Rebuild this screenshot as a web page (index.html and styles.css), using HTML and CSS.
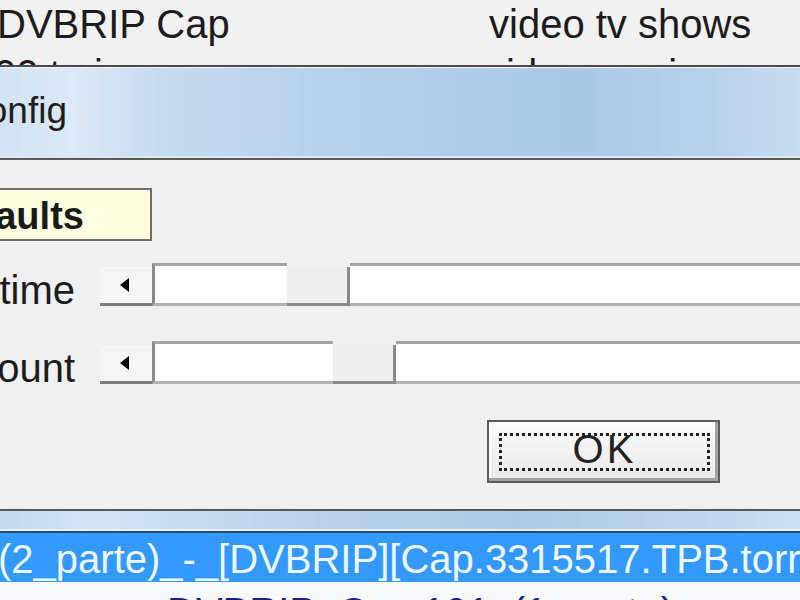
FILE: index.html
```html
<!DOCTYPE html>
<html lang="es">
<head>
  <meta charset="UTF-8" />
  <title>Config</title>
  <link rel="stylesheet" href="styles.css">
</head>
<body>
  <div class="screen">
    <div class="list list-top">
      <div class="row">
        <span class="col-name lead-1">DVBRIP Cap</span>
        <span class="col-tags">video tv shows</span>
      </div>
      <div class="row second">
        <span class="col-name lead-2">00 tvrip</span>
        <span class="col-tags">video movies</span>
      </div>
    </div>

    <div class="dlg">
      <div class="dlg-title"><span class="dlg-caption">Config</span></div>
      <div class="dlg-body">
        <div class="preset">Defaults</div>

        <div class="field">
          <label class="field-label">Wait time</label>
          <div class="sb">
            <div class="sb-arrow"><i class="tri-left"></i></div>
            <div class="sb-track first" style="width: 135px"></div>
            <div class="sb-thumb"></div>
            <div class="sb-track rest"></div>
          </div>
        </div>

        <div class="field">
          <label class="field-label">Retry count</label>
          <div class="sb">
            <div class="sb-arrow"><i class="tri-left"></i></div>
            <div class="sb-track first" style="width: 181px"></div>
            <div class="sb-thumb"></div>
            <div class="sb-track rest"></div>
          </div>
        </div>

        <div class="actions">
          <button class="btn"><span class="btn-focus">OK</span></button>
        </div>
      </div>
      <div class="dlg-foot"></div>
    </div>

    <div class="list list-bottom">
      <div class="row sel"><span class="lead-3">(2_parte)_-_[DVBRIP][Cap.3315517.TPB.torrent]</span></div>
      <div class="row next"><span class="lead-4">DVBRIP_Cap.101_(1_parte)</span></div>
    </div>
  </div>
</body>
</html>
```

FILE: styles.css
```css
:root {
  --face: #f0f0f0;
  --ink: #1c1c1c;
  --sel-blue: #3399ff;
  --navy: #1c1f8a;
}

body {
  margin: 0;
  background: var(--face);
  font-family: 'Liberation Sans', Arial, sans-serif;
  color: var(--ink);
}

.screen {
  width: 800px;
  height: 600px;
  overflow: hidden;
}

/* list behind the dialog */
.list {
  font-size: 40px;
  white-space: nowrap;
}

.list-top {
  height: 65px;
  overflow: hidden;
  background: #f1f1f1;
}

.row {
  display: flex;
  line-height: 48px;
}

.row.second {
  margin-top: 2px;
}

.col-name {
  width: 492px;
  flex-shrink: 0;
}

.lead-1 { margin-left: -3px; }
.lead-2 { margin-left: -6px; }

/* dialog */
.dlg {
  background: var(--face);
}

.dlg-title {
  height: 95px;
  box-sizing: border-box;
  border-top: 2px solid #4a4a4a;
  border-bottom: 2px solid #5a5a5a;
  box-shadow: inset 0 1px 0 #eef5fb, inset 0 -2px 0 #dde8f3;
  background: linear-gradient(90deg, #d2e3f3 0%, #dde9f6 9%, #c6dbef 20%, #b9d2eb 38%, #b0cce8 55%, #aac7e4 72%, #b7d1ea 88%, #c8dcf0 100%);
  padding-top: 24px;
}

.dlg-caption {
  display: block;
  margin-left: -40px;
  font-size: 37px;
  line-height: 40px;
  color: #1e1e1e;
}

.dlg-body {
  padding: 28px 0 26px;
}

.preset {
  width: 220px;
  height: 53px;
  box-sizing: border-box;
  margin-left: -68px;
  border: 2px solid #6e6e6e;
  background: #ffffe1;
  font-weight: bold;
  font-size: 38px;
  line-height: 43px;
  padding: 5px 0 0 0;
  color: #1a1a1a;
}

.field {
  display: flex;
  margin-top: 22px;
  height: 43px;
}

.field + .field {
  margin-top: 35px;
}

.field-label {
  width: 75px;
  margin-right: 25px;
  flex-shrink: 0;
  display: flex;
  justify-content: flex-end;
  white-space: nowrap;
  font-size: 40px;
  line-height: 43px;
  padding-top: 6px;
}

/* classic scroll bar */
.sb {
  flex: 1;
  display: flex;
}

.sb-arrow {
  width: 52px;
  flex-shrink: 0;
  box-sizing: border-box;
  margin-top: 4px;
  background: #f5f5f5;
  border-bottom: 3px solid #7b7b7b;
  display: flex;
  align-items: center;
  justify-content: center;
}

.tri-left {
  width: 0;
  height: 0;
  margin-right: 4px;
  border-top: 7px solid transparent;
  border-bottom: 7px solid transparent;
  border-right: 9px solid #000;
}

.sb-track {
  box-sizing: border-box;
  flex-shrink: 0;
  background: #fff;
  border-top: 3px solid #a6a6a6;
  border-bottom: 3px solid #b2b2b2;
}

.sb-track.first {
  border-left: 3px solid #8a8a8a;
}

.sb-track.rest {
  flex: 1;
}

.sb-thumb {
  width: 63px;
  flex-shrink: 0;
  box-sizing: border-box;
  margin-top: 4px;
  background: #efefef;
  border-right: 3px solid #8a8a8a;
  border-bottom: 3px solid #8a8a8a;
}

.actions {
  margin-top: 36px;
  padding-left: 487px;
}

.btn {
  display: block;
  width: 233px;
  height: 63px;
  box-sizing: border-box;
  padding: 11px 8px 10px 10px;
  border: 2px solid #5c5c5c;
  background: linear-gradient(#fbfbfb, #e9e9e9);
  box-shadow: inset -3px -3px 0 #a2a2a2, inset 2px 2px 0 #fff;
  font-family: 'Liberation Sans', Arial, sans-serif;
  font-size: 40px;
  color: #222;
}

.btn-focus {
  display: block;
  height: 38px;
  box-sizing: border-box;
  border: 3px dotted #222;
  line-height: 26px;
  letter-spacing: 3px;
  text-align: center;
}

.dlg-foot {
  height: 24px;
  box-sizing: border-box;
  border-top: 2px solid #585858;
  border-bottom: 2px solid #2c4a6c;
  box-shadow: inset 0 -2px 0 #e6eff8;
  background: linear-gradient(90deg, #c4d9ee 0%, #d3e4f4 12%, #b9d1ea 40%, #aec9e6 65%, #bdd4ec 85%, #cde0f2 100%);
}

/* list below the dialog */
.list-bottom {
  background: #f7f9fb;
}

.row.sel {
  height: 49px;
  line-height: 52px;
  overflow: hidden;
  background: var(--sel-blue);
  color: #eef8ff;
}

.lead-3 { margin-left: -2px; }

.row.next {
  line-height: 60px;
  color: var(--navy);
}

.lead-4 { margin-left: 167px; }
```
